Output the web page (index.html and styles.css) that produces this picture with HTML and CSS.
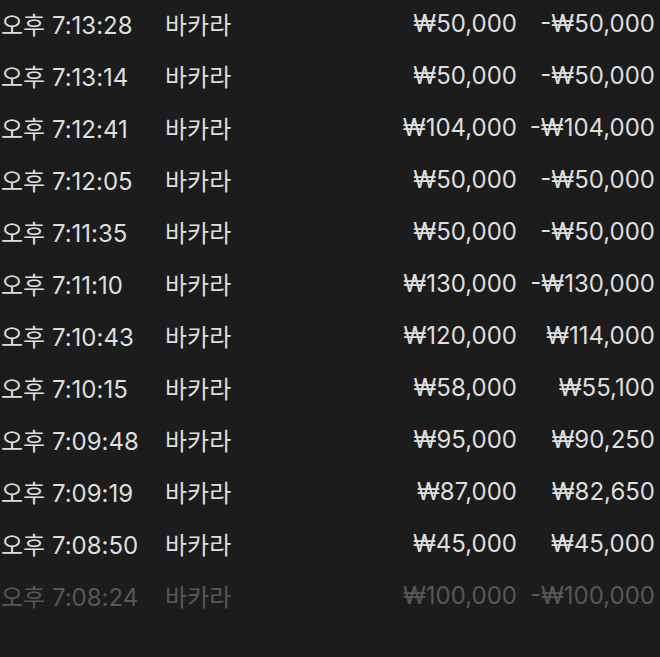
FILE: index.html
```html
<!DOCTYPE html>
<html lang="ko">
<head>
<meta charset="utf-8">
<link rel="stylesheet" href="styles.css">
</head>
<body>
<div class="list">
  <div class="row"><span class="time">오후 7:13:28</span><span class="game">바카라</span><span class="bet">₩50,000</span><span class="win">-₩50,000</span></div>
  <div class="row"><span class="time">오후 7:13:14</span><span class="game">바카라</span><span class="bet">₩50,000</span><span class="win">-₩50,000</span></div>
  <div class="row"><span class="time">오후 7:12:41</span><span class="game">바카라</span><span class="bet">₩104,000</span><span class="win">-₩104,000</span></div>
  <div class="row"><span class="time">오후 7:12:05</span><span class="game">바카라</span><span class="bet">₩50,000</span><span class="win">-₩50,000</span></div>
  <div class="row"><span class="time">오후 7:11:35</span><span class="game">바카라</span><span class="bet">₩50,000</span><span class="win">-₩50,000</span></div>
  <div class="row"><span class="time">오후 7:11:10</span><span class="game">바카라</span><span class="bet">₩130,000</span><span class="win">-₩130,000</span></div>
  <div class="row"><span class="time">오후 7:10:43</span><span class="game">바카라</span><span class="bet">₩120,000</span><span class="win">₩114,000</span></div>
  <div class="row"><span class="time">오후 7:10:15</span><span class="game">바카라</span><span class="bet">₩58,000</span><span class="win">₩55,100</span></div>
  <div class="row"><span class="time">오후 7:09:48</span><span class="game">바카라</span><span class="bet">₩95,000</span><span class="win">₩90,250</span></div>
  <div class="row"><span class="time">오후 7:09:19</span><span class="game">바카라</span><span class="bet">₩87,000</span><span class="win">₩82,650</span></div>
  <div class="row"><span class="time">오후 7:08:50</span><span class="game">바카라</span><span class="bet">₩45,000</span><span class="win">₩45,000</span></div>
  <div class="row faded"><span class="time">오후 7:08:24</span><span class="game">바카라</span><span class="bet">₩100,000</span><span class="win">-₩100,000</span></div>
</div>
</body>
</html>
```
FILE: styles.css
```css
html, body {
  margin: 0;
  padding: 0;
  background: #1c1c1c;
}
body {
  font-family: Inter, "Noto Sans CJK KR", sans-serif;
  font-size: 24px;
  color: #dedede;
  width: 660px;
  height: 657px;
  overflow: hidden;
}
.list {
  display: flex;
  flex-direction: column;
  padding-right: 5px;
  margin-top: -3px;
}
.row {
  display: grid;
  grid-template-columns: 165px 1fr auto 138px;
  align-items: center;
  height: 52px;
  white-space: nowrap;
}
.time { padding-left: 1px; }
.bet, .win { text-align: right; }
.faded { color: #575757; }
```
